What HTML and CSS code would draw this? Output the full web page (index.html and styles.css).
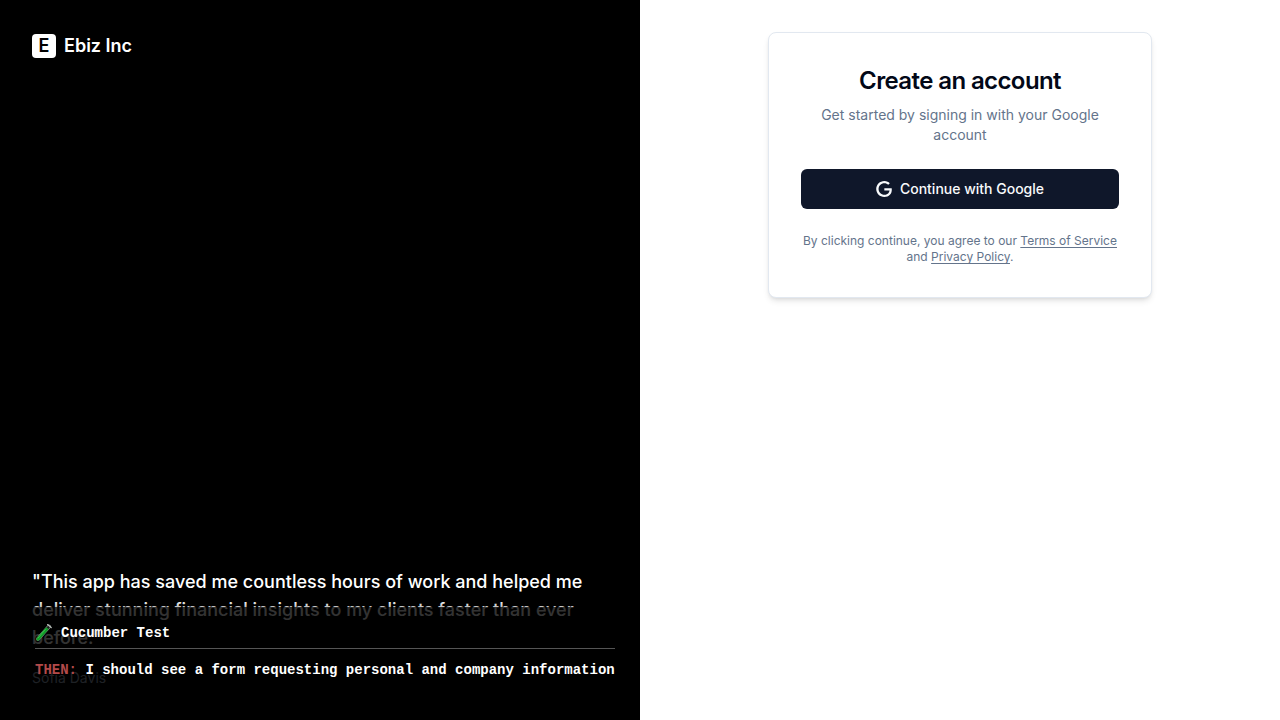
FILE: index.html
```html
<!DOCTYPE html>
<html lang="en">
<head>
<meta charset="utf-8">
<meta name="viewport" content="width=device-width, initial-scale=1">
<title>Create an account</title>
<link rel="stylesheet" href="styles.css">
</head>
<body>
<div class="page">
  <section class="brand-panel">
    <div class="brand">
      <span class="brand-mark" aria-hidden="true">E</span>
      <span>Ebiz Inc</span>
    </div>
    <blockquote class="testimonial">
      <p class="quote">"This app has saved me countless hours of work and helped me deliver stunning financial insights to my clients faster than ever before."</p>
      <footer class="author">Sofia Davis</footer>
    </blockquote>
    <aside class="test-overlay">
      <div class="test-title">
        <svg class="tube" viewBox="0 0 18 20" aria-hidden="true">
          <path d="M14 3.5 3 16" stroke="#8b948d" stroke-width="3.8" stroke-linecap="round"/>
          <path d="M14 3.5 3 16" stroke="#171d18" stroke-width="2.6" stroke-linecap="round"/>
          <path d="M11.5 6.3 3 16" stroke="#0f9d28" stroke-width="3.2" stroke-linecap="round"/>
          <path d="m10.6 6.2-7.8 9" stroke="#4fcf5d" stroke-width=".7"/>
          <path d="m12.6 1.6 3.6 3" stroke="#b9beba" stroke-width="1.3" stroke-linecap="round"/>
        </svg>
        <span>Cucumber Test</span>
      </div>
      <p class="test-step"><span class="keyword">THEN:</span> I should see a form requesting personal and company information</p>
    </aside>
  </section>
  <main class="form-panel">
    <section class="card">
      <header class="card-header">
        <h1 class="title">Create an account</h1>
        <p class="subtitle">Get started by signing in with your Google account</p>
      </header>
      <button class="google-button" type="button">
        <svg class="google-icon" viewBox="0 0 24 24" aria-hidden="true">
          <path fill="currentColor" d="M12.48 10.92v3.28h7.84c-.24 1.84-.853 3.187-1.787 4.133-1.147 1.147-2.933 2.4-6.053 2.4-4.827 0-8.6-3.893-8.6-8.72s3.773-8.72 8.6-8.72c2.6 0 4.507 1.027 5.907 2.347l2.307-2.307C18.747 1.44 16.133 0 12.48 0 5.867 0 .307 5.387.307 12s5.56 12 12.173 12c3.573 0 6.267-1.173 8.373-3.36 2.16-2.16 2.84-5.213 2.84-7.667 0-.76-.053-1.467-.173-2.053H12.48z"/>
        </svg>
        <span>Continue with Google</span>
      </button>
      <p class="legal">By clicking continue, you agree to our <a href="#">Terms of Service</a> and <a href="#">Privacy Policy</a>.</p>
    </section>
  </main>
</div>
</body>
</html>
```

FILE: styles.css
```css
* {
  box-sizing: border-box;
}

body,
h1,
p,
blockquote {
  margin: 0;
}

body {
  background: #fff;
  color: #020817;
  font-family: Inter, sans-serif;
}

.page {
  display: grid;
  grid-template-columns: repeat(2, minmax(0, 1fr));
  min-height: 100vh;
}

.brand-panel {
  position: relative;
  display: flex;
  flex-direction: column;
  justify-content: space-between;
  overflow: hidden;
  padding: 32px;
  background: #000;
  color: #fff;
}

.brand {
  display: flex;
  align-items: center;
  gap: 8px;
  font-size: 18px;
  font-weight: 600;
  line-height: 28px;
}

.brand-mark {
  width: 24px;
  height: 24px;
  border-radius: 4px;
  background: #fff;
  color: #000;
  line-height: 24px;
  text-align: center;
}

.testimonial {
  display: grid;
  gap: 16px;
}

.quote {
  font-size: 18px;
  font-weight: 500;
  line-height: 28px;
}

.author {
  color: #94a3b8;
  font-size: 14px;
  line-height: 20px;
}

.test-overlay {
  position: absolute;
  right: 0;
  bottom: 0;
  left: 0;
  padding: 16px 25px 40px 35px;
  background: rgba(0, 0, 0, 0.8);
  box-shadow: 0 0 10px rgba(0, 0, 0, 0.5);
  font-family: "Courier New", "Liberation Mono", monospace;
  font-size: 14px;
  font-weight: 700;
  line-height: 20px;
}

.test-title {
  display: flex;
  align-items: center;
  gap: 8px;
  padding-bottom: 5px;
  border-bottom: 1px solid #555;
}

.tube {
  width: 18px;
  height: 20px;
  fill: none;
}

.test-step {
  padding-top: 11px;
}

.keyword {
  color: #b34a4a;
}

.form-panel {
  display: flex;
  align-items: flex-start;
  justify-content: center;
  padding: 32px;
}

.card {
  display: flex;
  flex-direction: column;
  gap: 24px;
  width: 100%;
  max-width: 384px;
  padding: 32px;
  border: 1px solid #e2e8f0;
  border-radius: 8px;
  background: #fff;
  box-shadow: 0 4px 6px -1px rgba(0, 0, 0, 0.1), 0 2px 4px -2px rgba(0, 0, 0, 0.1);
  text-align: center;
}

.card-header {
  display: grid;
  gap: 8px;
}

.title {
  font-size: 24px;
  font-weight: 600;
  letter-spacing: -0.025em;
  line-height: 32px;
}

.subtitle {
  color: #64748b;
  font-size: 14px;
  line-height: 20px;
}

.google-button {
  display: flex;
  align-items: center;
  justify-content: center;
  gap: 8px;
  height: 40px;
  padding: 8px 16px;
  border: 0;
  border-radius: 6px;
  background: #0f172a;
  color: #f8fafc;
  font: 500 14px/20px Inter, sans-serif;
  cursor: pointer;
}

.google-icon {
  width: 16px;
  height: 16px;
}

.legal {
  color: #64748b;
  font-size: 12px;
  line-height: 16px;
}

.legal a {
  color: inherit;
  text-decoration: underline;
  text-underline-offset: 2px;
}
```
